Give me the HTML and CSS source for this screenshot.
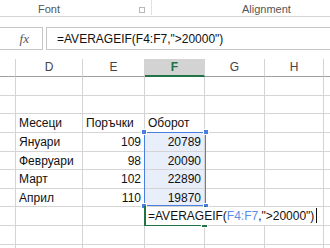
FILE: index.html
```html
<!DOCTYPE html>
<html lang="bg">
<head>
    <meta charset="UTF-8">
    <title>AVERAGEIF</title>
    <link rel="stylesheet" href="styles.css">
</head>
<body>
    <div class="ribbon">
        <div class="group font-group">
            <span class="group-label">Font</span>
            <span class="launcher"></span>
        </div>
        <div class="group align-group">
            <span class="group-label">Alignment</span>
        </div>
    </div>

    <div class="formula-bar">
        <div class="fx-box"><span class="fx">fx</span></div>
        <div class="formula-input">=AVERAGEIF(F4:F7,"&gt;20000")</div>
    </div>

    <div class="sheet">
        <div class="grid">
            <!-- column headers -->
            <div class="hdr corner"></div>
            <div class="hdr">D</div>
            <div class="hdr">E</div>
            <div class="hdr active">F</div>
            <div class="hdr">G</div>
            <div class="hdr">H</div>
            <div class="hdr last"></div>

            <!-- row 1 -->
            <div class="rh"></div><div class="c"></div><div class="c"></div><div class="c"></div><div class="c"></div><div class="c"></div><div class="c last"></div>
            <!-- row 2 -->
            <div class="rh"></div><div class="c"></div><div class="c"></div><div class="c"></div><div class="c"></div><div class="c"></div><div class="c last"></div>
            <!-- row 3 -->
            <div class="rh"></div><div class="c">Месеци</div><div class="c">Поръчки</div><div class="c">Оборот</div><div class="c"></div><div class="c"></div><div class="c last"></div>
            <!-- row 4 -->
            <div class="rh"></div><div class="c">Януари</div><div class="c num">109</div><div class="c num sel">20789</div><div class="c"></div><div class="c"></div><div class="c last"></div>
            <!-- row 5 -->
            <div class="rh"></div><div class="c">Февруари</div><div class="c num">98</div><div class="c num sel">20090</div><div class="c"></div><div class="c"></div><div class="c last"></div>
            <!-- row 6 -->
            <div class="rh"></div><div class="c">Март</div><div class="c num">102</div><div class="c num sel">22890</div><div class="c"></div><div class="c"></div><div class="c last"></div>
            <!-- row 7 -->
            <div class="rh"></div><div class="c">Април</div><div class="c num">110</div><div class="c num sel">19870</div><div class="c"></div><div class="c"></div><div class="c last"></div>
            <!-- row 8 -->
            <div class="rh"></div><div class="c"></div><div class="c"></div><div class="c"></div><div class="c"></div><div class="c"></div><div class="c last"></div>
            <!-- row 9 -->
            <div class="rh"></div><div class="c"></div><div class="c"></div><div class="c"></div><div class="c"></div><div class="c"></div><div class="c last"></div>
            <!-- row 10 -->
            <div class="rh"></div><div class="c"></div><div class="c"></div><div class="c"></div><div class="c"></div><div class="c"></div><div class="c last"></div>
        </div>

        <!-- referenced range F4:F7 -->
        <div class="range">
            <span class="handle tl"></span>
            <span class="handle tr"></span>
            <span class="handle bl"></span>
            <span class="handle br"></span>
        </div>

        <!-- cell being edited, F8 -->
        <div class="active-cell"><span class="fill-handle"></span></div>
        <div class="editor">=AVERAGEIF(<span class="ref">F4:F7</span>,"&gt;20000")<span class="caret"></span></div>
    </div>
</body>
</html>
```

FILE: styles.css
```css
body {
    margin: 0;
    height: 248px;
    background: #fff;
    font-family: "Liberation Sans", Arial, sans-serif;
    color: #222;
    overflow: hidden;
}

/* ribbon group labels */
.ribbon {
    display: flex;
    height: 16px;
    border-bottom: 1px solid #d5d5d5;
}
.group {
    position: relative;
    font-size: 11px;
    color: #555;
    line-height: 18px;
}
.font-group {
    width: 152px;
    height: 15px;
    padding-left: 38px;
    box-sizing: border-box;
    border-right: 1px solid #e1e1e1;
}
.align-group {
    flex: 1;
    padding-left: 90px;
}
.launcher {
    position: absolute;
    left: 139px;
    top: 7px;
    width: 4px;
    height: 4px;
    border: 1px solid #b8b8b8;
}

/* formula bar */
.formula-bar {
    display: flex;
    gap: 3px;
    margin-top: 10px;
    height: 23px;
}
.fx-box {
    width: 44px;
    margin-left: -1px;
    border: 1px solid #c6c6c6;
    border-left: none;
    display: flex;
    align-items: center;
    justify-content: flex-end;
    padding-right: 13px;
    box-sizing: border-box;
}
.fx {
    font-family: "Liberation Serif", "Times New Roman", serif;
    font-style: italic;
    font-size: 13px;
    color: #555;
}
.formula-input {
    flex: 1;
    border: 1px solid #c6c6c6;
    border-right: none;
    font-size: 12px;
    line-height: 22px;
    padding-left: 10px;
    color: #111;
}

/* worksheet */
.sheet {
    position: relative;
    margin-top: 9px;
}
.grid {
    display: grid;
    grid-template-columns: 16px 67px 62px 60px 60px 59px 1fr;
    grid-template-rows: 18px 19px 18px 19px 19px 18px 19px 18px 19px 19px 10px;
    font-size: 12px;
}
.hdr {
    border-right: 1px solid #d4d4d4;
    border-bottom: 1px solid #9f9f9f;
    text-align: center;
    font-size: 12px;
    line-height: 17px;
    color: #444;
}
.hdr.active {
    background: #d3d3d3;
    color: #217346;
    font-weight: bold;
    border-bottom: 2px solid #217346;
}
.rh,
.c {
    border-right: 1px solid #d4d4d4;
    border-bottom: 1px solid #d4d4d4;
}
.last {
    border-right: none;
}
.c {
    padding: 0 3px;
    line-height: 19px;
    white-space: nowrap;
    color: #111;
}
.num {
    text-align: right;
}
.sel {
    background: #e8eefa;
}

.range {
    position: absolute;
    left: 144px;
    top: 73px;
    width: 60px;
    height: 72px;
    border: 1px solid #4a7fe0;
}
.handle {
    position: absolute;
    width: 4px;
    height: 4px;
    background: #4a7fe0;
    border: 1px solid #fff;
}
.handle.tl { left: -4px; top: -4px; }
.handle.tr { right: -4px; top: -4px; }
.handle.bl { left: -4px; bottom: -4px; }
.handle.br { right: -4px; bottom: -4px; }

.active-cell {
    position: absolute;
    left: 144px;
    top: 147px;
    width: 58px;
    height: 18px;
    border: 2px solid #217346;
    border-top: none;
}
.fill-handle {
    position: absolute;
    right: -4px;
    bottom: -4px;
    width: 5px;
    height: 5px;
    background: #217346;
    border: 1px solid #fff;
}
.editor {
    position: absolute;
    left: 146px;
    top: 148px;
    padding: 0 2px;
    background: #fff;
    font-size: 12px;
    line-height: 18px;
    color: #111;
    white-space: nowrap;
}
.ref {
    color: #5b8de6;
}
.caret {
    display: inline-block;
    width: 1px;
    height: 15px;
    margin-left: 2px;
    vertical-align: -3px;
    background: #111;
}
```
